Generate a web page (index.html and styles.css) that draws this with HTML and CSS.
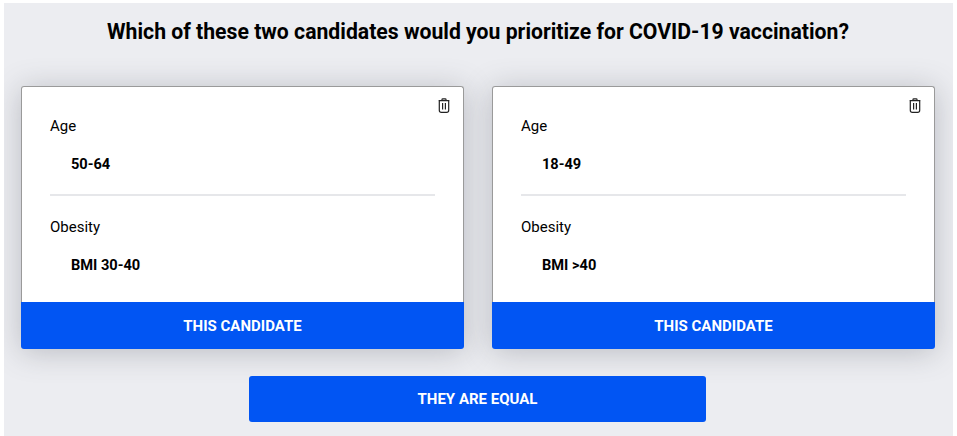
FILE: index.html
```html
<!DOCTYPE html>
<html lang="en">
<head>
<meta charset="utf-8">
<title>Vaccination priority</title>
<link rel="stylesheet" href="styles.css">
</head>
<body>
<main class="panel">
  <h1 class="title">Which of these two candidates would you prioritize for COVID-19 vaccination?</h1>
  <div class="cards">
    <section class="card">
      <div class="card-body">
        <svg class="trash" viewBox="0 0 12 15" aria-hidden="true"><path d="M4 2.2V1.6C4 1.1 4.3.8 4.8.8h2.4c.5 0 .8.3.8.8v.6M.6 2.6h10.8M1.3 2.6v9.6c0 1.2.9 2.1 2.1 2.1h5.2c1.2 0 2.1-.9 2.1-2.1V2.6M4.6 5v6.6M7.4 5v6.6"/></svg>
        <div class="attr attr-first">
          <div class="label">Age</div>
          <div class="value">50-64</div>
        </div>
        <div class="attr">
          <div class="label">Obesity</div>
          <div class="value">BMI 30-40</div>
        </div>
      </div>
      <button class="btn btn-card">THIS CANDIDATE</button>
    </section>
    <section class="card">
      <div class="card-body">
        <svg class="trash" viewBox="0 0 12 15" aria-hidden="true"><path d="M4 2.2V1.6C4 1.1 4.3.8 4.8.8h2.4c.5 0 .8.3.8.8v.6M.6 2.6h10.8M1.3 2.6v9.6c0 1.2.9 2.1 2.1 2.1h5.2c1.2 0 2.1-.9 2.1-2.1V2.6M4.6 5v6.6M7.4 5v6.6"/></svg>
        <div class="attr attr-first">
          <div class="label">Age</div>
          <div class="value">18-49</div>
        </div>
        <div class="attr">
          <div class="label">Obesity</div>
          <div class="value">BMI &gt;40</div>
        </div>
      </div>
      <button class="btn btn-card">THIS CANDIDATE</button>
    </section>
  </div>
  <div class="equal-row">
    <button class="btn btn-equal">THEY ARE EQUAL</button>
  </div>
</main>
</body>
</html>
```
FILE: styles.css
```css
html, body {
  margin: 0;
  height: 100%;
  background: #fff;
  overflow: hidden;
}
body {
  padding: 3px 4px 0;
  box-sizing: border-box;
  font-family: Roboto, "Liberation Sans", sans-serif;
  color: #000;
}
.panel {
  height: 433px;
  background: #ecedf1;
  box-sizing: border-box;
  padding: 16px 18px 0 17px;
  overflow: hidden;
}
.title {
  margin: 0;
  font-size: 21.2px;
  line-height: 26px;
  font-weight: 700;
  text-align: center;
  height: 67px;
}
.cards {
  display: flex;
  gap: 28px;
}
.card {
  flex: 1 1 0;
  height: 263px;
  display: flex;
  flex-direction: column;
  border-radius: 3px;
  box-shadow: 0 3px 30px rgba(80, 85, 95, .32);
}
.card-body {
  position: relative;
  flex: 1;
  background: #fff;
  border: 1px solid #9a9a9a;
  border-bottom: 0;
  border-radius: 3px 3px 0 0;
  padding: 30px 28px 0;
}
.trash {
  position: absolute;
  top: 11px;
  right: 13px;
  width: 12px;
  height: 15px;
  fill: none;
  stroke: #222;
  stroke-width: 1.2;
}
.attr-first {
  height: 77px;
  border-bottom: 2px solid #e6e7ea;
  margin-bottom: 22px;
}
.label {
  font-size: 15px;
  line-height: 18px;
  font-weight: 400;
}
.value {
  margin: 20px 0 0 21px;
  font-size: 14.6px;
  line-height: 18px;
  font-weight: 700;
}
.btn {
  display: block;
  border: 0;
  padding: 0;
  background: #0155f3;
  color: #fff;
  font-family: inherit;
  font-size: 15px;
  font-weight: 700;
  text-align: center;
}
.btn-card {
  height: 47px;
  width: 100%;
  border-radius: 0 0 3px 3px;
}
.equal-row {
  display: flex;
  justify-content: center;
  margin: 27px 1px 0 0;
}
.btn-equal {
  width: 457px;
  height: 46px;
  border-radius: 3px;
}
```
